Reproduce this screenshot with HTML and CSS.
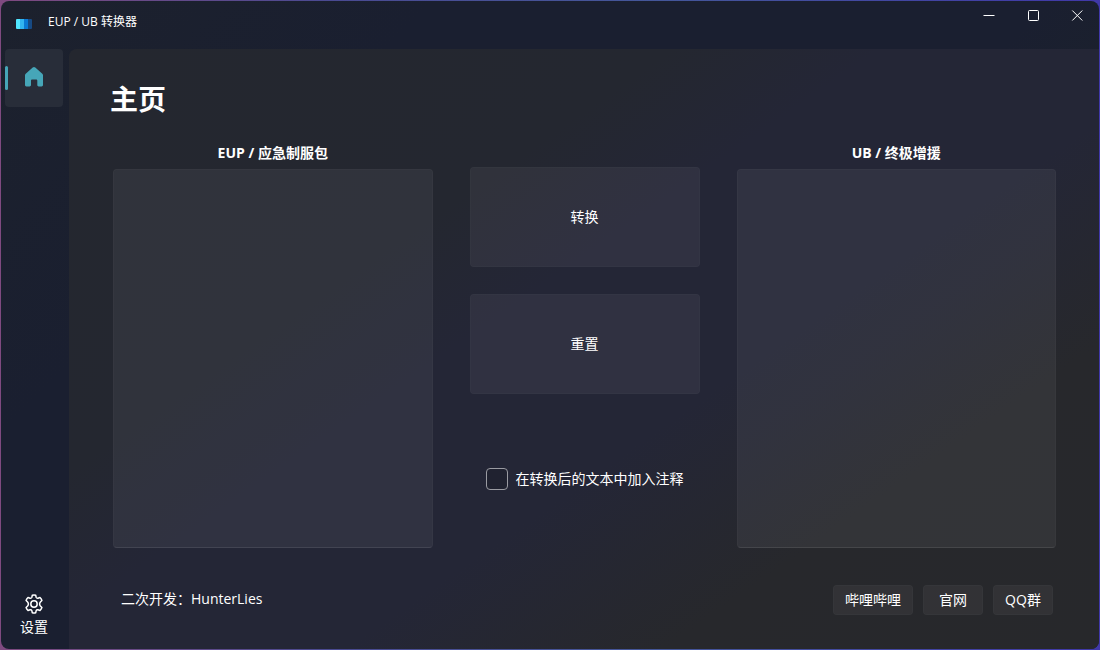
FILE: index.html
```html
<!DOCTYPE html>
<html lang="zh-CN">
<head>
<meta charset="utf-8">
<title>EUP / UB 转换器</title>
<link rel="stylesheet" href="styles.css">
</head>
<body>
<div class="window">
  <header class="titlebar">
    <svg class="app-icon" width="16" height="10" viewBox="0 0 16 10" aria-hidden="true">
      <rect width="5" height="10" rx="1" fill="#50e6ff"/>
      <rect x="11" width="5" height="10" rx="1" fill="#174a84"/>
      <rect x="4" width="4" height="10" fill="#32b4f0"/>
      <rect x="8" width="4" height="10" fill="#0a78d4"/>
    </svg>
    <span class="app-title">EUP / UB 转换器</span>
    <div class="caption-buttons">
      <button class="caption" aria-label="最小化"><svg width="12" height="12" viewBox="0 0 12 12"><path d="M.5 5.500h11"/></svg></button>
      <button class="caption" aria-label="最大化"><svg width="12" height="12" viewBox="0 0 12 12"><rect x="1.500" y=".5" width="10" height="10" rx="1"/></svg></button>
      <button class="caption" aria-label="关闭"><svg width="12" height="12" viewBox="0 0 12 12"><path d="M1.300.5l10 10M11.300.5l-10 10"/></svg></button>
    </div>
  </header>
  <div class="body">
    <nav class="sidebar">
      <button class="nav-item nav-active" aria-label="主页">
        <svg width="18" height="20" viewBox="0 0 18 20" aria-hidden="true"><path fill="#46a6b8" d="M7.700.6a2 2 0 0 1 2.600 0l7 6.100c.5.4.7 1 .7 1.600v9.800c0 .8-.6 1.400-1.400 1.400h-2.900c-.8 0-1.400-.6-1.400-1.400v-4.600c0-.5-.4-.9-.9-.9H6.900c-.5 0-.9.4-.9.9v4.600c0 .8-.6 1.400-1.400 1.400H1.400C.6 19.500 0 18.900 0 18.100V8.300c0-.6.2-1.200.7-1.600z"/></svg>
      </button>
      <button class="nav-item nav-settings">
        <svg width="20" height="20" viewBox="0 0 20 20" aria-hidden="true" fill="none" stroke="#fff" stroke-width="1.500" stroke-linejoin="round"><path d="M8.300 1.200Q10 .6 11.700 1.200L12.100 3.200Q12.600 4.400 13.900 4.200L16 3.500Q17.400 4.800 17.900 6.500L16.400 8Q14.800 10 16.400 12L17.900 13.500Q17.300 15.200 16 16.500L13.900 15.800Q12.600 15.600 12.100 16.800L11.700 18.800Q10 19.400 8.300 18.800L7.900 16.800Q7.400 15.600 6.100 15.800L4 16.500Q2.600 15.200 2.100 13.500L3.600 12Q5.200 10 3.600 8L2.100 6.500Q2.600 4.800 4 3.500L6.100 4.200Q7.400 4.400 7.900 3.200Z"/><circle cx="10" cy="10" r="3.200"/></svg>
        <span>设置</span>
      </button>
    </nav>
    <main class="content">
      <h1 class="page-title">主页</h1>
      <div class="converter">
        <div class="column">
          <label class="column-label" for="eup">EUP / 应急制服包</label>
          <textarea class="editor" id="eup"></textarea>
        </div>
        <div class="actions">
          <button class="action">转换</button>
          <button class="action">重置</button>
          <label class="check"><input class="check-box" type="checkbox">在转换后的文本中加入注释</label>
        </div>
        <div class="column">
          <label class="column-label" for="ub">UB / 终极增援</label>
          <textarea class="editor" id="ub"></textarea>
        </div>
      </div>
      <footer class="footer">
        <span class="credit">二次开发：HunterLies</span>
        <div class="links">
          <button class="link-button">哔哩哔哩</button>
          <button class="link-button">官网</button>
          <button class="link-button">QQ群</button>
        </div>
      </footer>
    </main>
  </div>
</div>
</body>
</html>
```

FILE: styles.css
```css
* {
  box-sizing: border-box;
}

body {
  margin: 0;
  height: 100vh;
  padding: 1px;
  background: linear-gradient(to right, #7f4a80, #4a4a92 30%, #44579a 60%, #4038a8);
  color: #fff;
  font: 14px/20px "Open Sans", "Noto Sans CJK SC", sans-serif;
}

button {
  padding: 0;
  border: 0;
  background: none;
  color: inherit;
  font: inherit;
}

.window {
  display: flex;
  flex-direction: column;
  height: 100%;
  overflow: hidden;
  border-radius: 8px;
  background: linear-gradient(135deg, #1c212d, #1a1f30 25%, #1a1f30 60%, #1c222b 75%);
}

.titlebar {
  display: flex;
  height: 48px;
  padding-left: 15px;
}

.app-icon {
  margin-top: 18px;
}

.app-title {
  margin: 11px 0 0 16px;
  font-size: 12px;
}

.caption-buttons {
  display: flex;
  margin-left: auto;
}

.caption {
  display: flex;
  align-items: center;
  justify-content: center;
  width: 44px;
  height: 30px;
}

.caption svg {
  fill: none;
  stroke: #fff;
  stroke-width: 1;
}

.body {
  display: flex;
  flex: 1;
  min-height: 0;
}

.sidebar {
  display: flex;
  flex-direction: column;
  justify-content: space-between;
  width: 68px;
  padding: 0 6px 5px 4px;
}

.nav-item {
  display: flex;
  flex-direction: column;
  align-items: center;
  justify-content: center;
  height: 58px;
  border-radius: 4px;
}

.nav-active {
  position: relative;
  padding-bottom: 2px;
  background: #282d39;
}

.nav-active::before {
  content: "";
  position: absolute;
  left: 0;
  top: 17px;
  width: 3px;
  height: 24px;
  border-radius: 2px;
  background: #46a6b8;
}

.nav-settings {
  gap: 3px;
}

.content {
  display: flex;
  flex: 1;
  flex-direction: column;
  min-width: 0;
  padding: 30px 43px 34px 44px;
  border-radius: 8px 0 0 0;
  background: linear-gradient(145deg, #24272f, #242730 32%, #242636 43%, #242636 60%, #27282c 77%, #27282b);
}

.page-title {
  margin: 0 0 23px -3px;
  font-size: 28px;
  line-height: 40px;
}

.converter {
  display: grid;
  flex: 1;
  grid-template-columns: 1fr 230px 1fr;
  gap: 37px;
  min-height: 0;
}

.column {
  display: flex;
  flex-direction: column;
  gap: 5px;
  min-width: 0;
}

.column-label {
  font-weight: 700;
  line-height: 22px;
  text-align: center;
}

.editor {
  flex: 1;
  width: 100%;
  padding: 8px;
  border: 1px solid rgba(255, 255, 255, 0.08);
  border-bottom-color: rgba(255, 255, 255, 0.14);
  border-radius: 4px;
  background: rgba(255, 255, 255, 0.057);
  background-clip: padding-box;
  color: inherit;
  font: inherit;
  resize: none;
}

.actions {
  display: flex;
  flex-direction: column;
  gap: 27px;
  padding-top: 25px;
}

.action {
  height: 100px;
  border: 1px solid rgba(255, 255, 255, 0.02);
  border-radius: 4px;
  background: rgba(255, 255, 255, 0.055);
}

.check {
  display: flex;
  align-items: center;
  gap: 8px;
  margin: 47px 0 0 16px;
  white-space: nowrap;
}

.check-box {
  width: 22px;
  height: 22px;
  margin: 0;
  appearance: none;
  border: 1px solid #9a9ba2;
  border-radius: 4px;
  background: #202230;
}

.footer {
  display: flex;
  align-items: flex-start;
  justify-content: space-between;
  margin-top: 37px;
  padding: 0 3px 0 8px;
}

.credit {
  line-height: 28px;
}

.links {
  display: flex;
  gap: 10px;
}

.link-button {
  min-width: 60px;
  height: 30px;
  padding: 0 11px;
  border: 1px solid rgba(255, 255, 255, 0.02);
  border-radius: 4px;
  background: rgba(255, 255, 255, 0.05);
}
```
